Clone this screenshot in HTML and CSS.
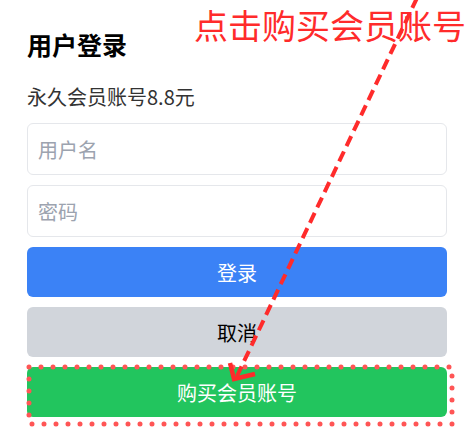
FILE: index.html
```html
<!DOCTYPE html>
<html lang="zh-CN">
<head>
<meta charset="utf-8">
<title>用户登录</title>
<link rel="stylesheet" href="styles.css">
</head>
<body>
<main class="panel">
  <h1 class="title">用户登录</h1>
  <p class="subtitle">永久会员账号8.8元</p>
  <form class="form">
    <input class="field" type="text" placeholder="用户名">
    <input class="field" type="password" placeholder="密码">
    <button class="btn btn-login" type="button">登录</button>
    <button class="btn btn-cancel" type="button">取消</button>
    <button class="btn btn-buy" type="button">购买会员账号</button>
  </form>
</main>
<div class="note">点击购买会员账号</div>
<svg class="overlay" width="473" height="443" viewBox="0 0 473 443">
  <rect class="dots" x="29" y="367" width="423" height="57"></rect>
  <line class="arrow-line" x1="417" y1="-2" x2="237" y2="376"></line>
  <polyline class="arrow-head" points="230,363 234,379 255,374"></polyline>
</svg>
</body>
</html>
```

FILE: styles.css
```css
html, body {
  margin: 0;
  padding: 0;
  background: #ffffff;
}
body {
  font-family: "Noto Sans CJK SC", "Noto Sans", sans-serif;
  width: 473px;
  height: 443px;
  overflow: hidden;
  position: relative;
}
.panel {
  padding: 29px 26px 0 27px;
}
.title {
  margin: 0;
  font-size: 25px;
  line-height: 31px;
  font-weight: 700;
  color: #000;
}
.subtitle {
  margin: 23px 0 0;
  font-size: 20px;
  line-height: 28px;
  color: #333;
}
.form {
  margin-top: 12px;
  display: flex;
  flex-direction: column;
  gap: 10px;
}
.field {
  box-sizing: border-box;
  height: 52px;
  width: 100%;
  margin: 0;
  padding: 0 10px;
  border: 1px solid #e5e7eb;
  border-radius: 6px;
  font-family: inherit;
  font-size: 20px;
  color: #111;
  background: #fff;
  outline: none;
}
.field::placeholder {
  color: #9ca3af;
}
.btn {
  box-sizing: border-box;
  height: 50px;
  width: 100%;
  margin: 0;
  border: none;
  border-radius: 6px;
  font-family: inherit;
  font-size: 20px;
  cursor: pointer;
}
.btn-login {
  background: #3b82f6;
  color: #fff;
}
.btn-cancel {
  background: #d1d5db;
  color: #000;
}
.btn-buy {
  background: #22c55e;
  color: #fff;
}
.note {
  position: absolute;
  left: 194px;
  top: 5px;
  font-size: 34px;
  line-height: 40px;
  color: #ff2b2b;
  white-space: nowrap;
}
.overlay {
  position: absolute;
  left: 0;
  top: 0;
  pointer-events: none;
}
.dots {
  fill: none;
  stroke: #ff5555;
  stroke-width: 5;
  stroke-linecap: round;
  stroke-dasharray: 0 12;
}
.arrow-line {
  stroke: #ff2b2b;
  stroke-width: 4;
  stroke-dasharray: 11 6;
}
.arrow-head {
  fill: none;
  stroke: #ff2b2b;
  stroke-width: 4.5;
  stroke-linejoin: miter;
}
```
